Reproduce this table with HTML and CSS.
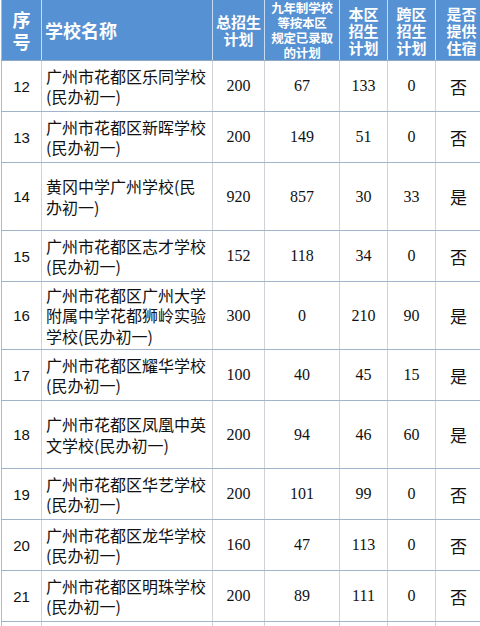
FILE: index.html
```html
<!DOCTYPE html>
<html lang="zh">
<head>
<meta charset="utf-8">
<link rel="stylesheet" href="styles.css">
</head>
<body>
<table class="plan">
  <colgroup>
    <col class="c-no">
    <col class="c-name">
    <col class="c-total">
    <col class="c-nine">
    <col class="c-local">
    <col class="c-cross">
    <col class="c-board">
  </colgroup>
  <thead>
    <tr class="head">
      <th class="h-no">序<br>号</th>
      <th class="h-name">学校名称</th>
      <th class="h-mid">总招生<br>计划</th>
      <th class="h-small"><span class="ln">九年制学校</span><span class="ln">等按本区</span><span class="ln">规定已录取</span><span class="ln">的计划</span></th>
      <th class="h-mid">本区<br>招生<br>计划</th>
      <th class="h-mid">跨区<br>招生<br>计划</th>
      <th class="h-mid">是否<br>提供<br>住宿</th>
    </tr>
  </thead>
  <tbody>
    <tr class="r2"><td class="no">12</td><td class="name">广州市花都区乐同学校(民办初一)</td><td class="num">200</td><td class="num">67</td><td class="num">133</td><td class="num">0</td><td class="yn">否</td></tr>
    <tr class="r2"><td class="no">13</td><td class="name">广州市花都区新晖学校(民办初一)</td><td class="num">200</td><td class="num">149</td><td class="num">51</td><td class="num">0</td><td class="yn">否</td></tr>
    <tr class="r3"><td class="no">14</td><td class="name">黄冈中学广州学校(民办初一)</td><td class="num">920</td><td class="num">857</td><td class="num">30</td><td class="num">33</td><td class="yn">是</td></tr>
    <tr class="r2"><td class="no">15</td><td class="name">广州市花都区志才学校(民办初一)</td><td class="num">152</td><td class="num">118</td><td class="num">34</td><td class="num">0</td><td class="yn">否</td></tr>
    <tr class="r3"><td class="no">16</td><td class="name">广州市花都区广州大学附属中学花都狮岭实验学校(民办初一)</td><td class="num">300</td><td class="num">0</td><td class="num">210</td><td class="num">90</td><td class="yn">是</td></tr>
    <tr class="r2"><td class="no">17</td><td class="name">广州市花都区耀华学校(民办初一)</td><td class="num">100</td><td class="num">40</td><td class="num">45</td><td class="num">15</td><td class="yn">是</td></tr>
    <tr class="r3"><td class="no">18</td><td class="name">广州市花都区凤凰中英文学校(民办初一)</td><td class="num">200</td><td class="num">94</td><td class="num">46</td><td class="num">60</td><td class="yn">是</td></tr>
    <tr class="r2"><td class="no">19</td><td class="name">广州市花都区华艺学校(民办初一)</td><td class="num">200</td><td class="num">101</td><td class="num">99</td><td class="num">0</td><td class="yn">否</td></tr>
    <tr class="r2"><td class="no">20</td><td class="name">广州市花都区龙华学校(民办初一)</td><td class="num">160</td><td class="num">47</td><td class="num">113</td><td class="num">0</td><td class="yn">否</td></tr>
    <tr class="r2"><td class="no">21</td><td class="name">广州市花都区明珠学校(民办初一)</td><td class="num">200</td><td class="num">89</td><td class="num">111</td><td class="num">0</td><td class="yn">否</td></tr>
    <tr class="r2"><td class="no"></td><td class="name"></td><td class="num"></td><td class="num"></td><td class="num"></td><td class="num"></td><td class="yn"></td></tr>
  </tbody>
</table>
</body>
</html>
```

FILE: styles.css
```css
html, body {
  margin: 0;
  padding: 0;
  overflow: hidden;
  background: #ffffff;
}

body {
  width: 480px;
  height: 626px;
  font-family: "Noto Sans CJK SC", "Noto Sans", sans-serif;
  color: #111111;
}

.plan {
  border-collapse: collapse;
  table-layout: fixed;
  width: 486px;
  margin-left: 1px;
}

.c-no { width: 40px; }
.c-name { width: 171px; }
.c-total { width: 52px; }
.c-nine { width: 75px; }
.c-local { width: 48px; }
.c-cross { width: 48px; }
.c-board { width: 52px; }

.head th {
  height: 60px;
  padding: 0;
  background: #5591d3;
  color: #ffffff;
  font-weight: 700;
  text-align: center;
  vertical-align: middle;
  border-left: 1px solid #c9dcef;
  border-right: 1px solid #c9dcef;
  border-bottom: 1px solid #8fa9c2;
}

.head .h-no {
  font-size: 18px;
  line-height: 22px;
  border-left: 1px solid #a9bdd0;
}

.head .h-name {
  font-size: 18px;
  line-height: 22px;
  text-align: left;
  padding-left: 3px;
}

.head .h-mid {
  font-size: 15px;
  line-height: 17px;
}

.head .h-small {
  font-size: 12.5px;
  line-height: 15px;
  letter-spacing: -0.2px;
}

.h-small .ln {
  display: block;
  height: 15px;
  overflow: visible;
  white-space: nowrap;
}

tbody td {
  padding: 0 4px;
  vertical-align: middle;
  border-left: 1px solid #cfd3d7;
  border-right: 1px solid #cfd3d7;
  border-bottom: 1px solid #9fb4c8;
}

.r2 td { height: 50px; }
.r3 td { height: 67px; }

tbody td.no {
  border-left: 1px solid #a9bdd0;
  text-align: center;
  font-family: "Liberation Sans", Arial, sans-serif;
  font-size: 15px;
  padding: 0;
}

tbody td.name {
  font-size: 16px;
  line-height: 20.5px;
  text-align: left;
  padding: 0 3px 0 4px;
}

tbody td.num {
  text-align: center;
  font-family: "Liberation Serif", "Times New Roman", serif;
  font-size: 16px;
  padding: 0;
}

tbody td.yn {
  text-align: center;
  font-size: 17px;
  padding: 0 6px 0 0;
}
```
